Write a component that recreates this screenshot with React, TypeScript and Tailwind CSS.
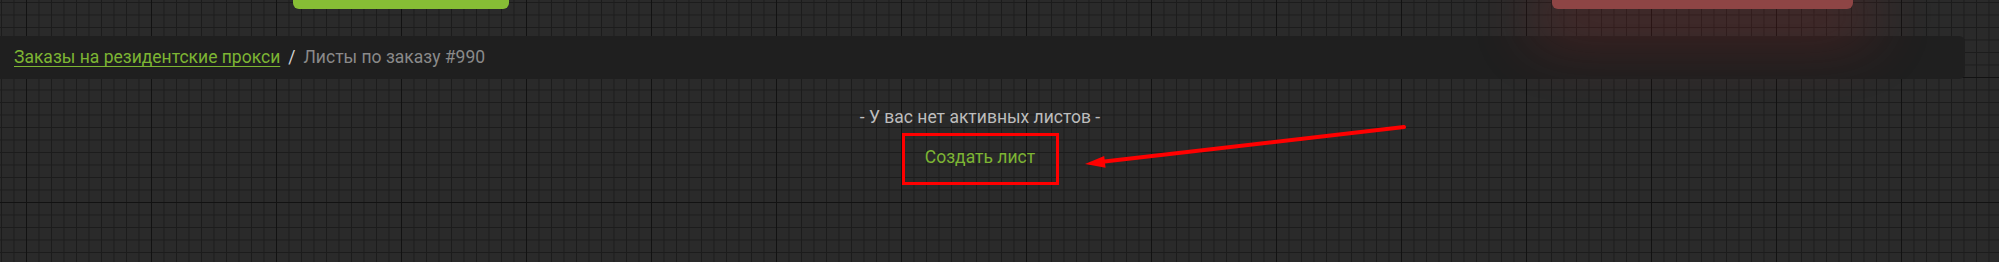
import React from 'react';

const Arrow = () => (
  <svg className="absolute left-0 top-0 pointer-events-none" width="1999" height="262" viewBox="0 0 1999 262">
    <line x1="1404" y1="127" x2="1100" y2="162" stroke="#ff0000" strokeWidth="4" strokeLinecap="round" />
    <polygon points="1085,164 1105.6,167.8 1104.2,156" fill="#ff0000" />
  </svg>
);

const App = () => {
  return (
    <div
      className="relative w-[1999px] h-[262px] overflow-hidden bg-[#2a2a2a] font-['Roboto',sans-serif] bg-[linear-gradient(to_right,#121212_1px,transparent_1px),linear-gradient(to_bottom,#121212_1px,transparent_1px),linear-gradient(to_right,#1c1c1c_1px,transparent_1px),linear-gradient(to_bottom,#1c1c1c_1px,transparent_1px)] bg-[length:125px_125px,125px_125px,12.5px_12.5px,12.5px_12.5px] bg-[position:26px_77px,26px_77px,1px_2px,1px_2px]"
    >
      <div className="relative z-10 flex h-[9px]">
        <div className="ml-[293px] w-[216px] h-full rounded-b-md bg-[#86bd35]" />
        <div className="ml-[1043px] w-[301px] h-full rounded-b-md bg-[#8e4545] shadow-[0_12px_60px_20px_rgba(160,40,40,0.3)]" />
      </div>

      <div className="mt-[27px] w-[1965px] h-[43px] rounded-r-md bg-[#1f1f1f] flex items-center pl-[14px] text-[17.5px]">
        <a href="#" className="text-[#7db533] underline underline-offset-[3px]">Заказы на резидентские прокси</a>
        <span className="mx-[8px] text-[#d4d4d4]">/</span>
        <span className="text-[#8a8a8a]">Листы по заказу #990</span>
      </div>

      <div className="w-[1960px] flex flex-col items-center pt-[26px]">
        <p className="text-[17.5px] leading-6 text-[#bdbdbd]">- У вас нет активных листов -</p>
        <div className="mt-[4px] w-[157px] h-[52px] border-[3px] border-[#ff0000] flex items-center justify-center pb-[4px]">
          <button className="text-[17.5px] text-[#7db533]">Создать лист</button>
        </div>
      </div>

      <Arrow />
    </div>
  );
};

export default App;
